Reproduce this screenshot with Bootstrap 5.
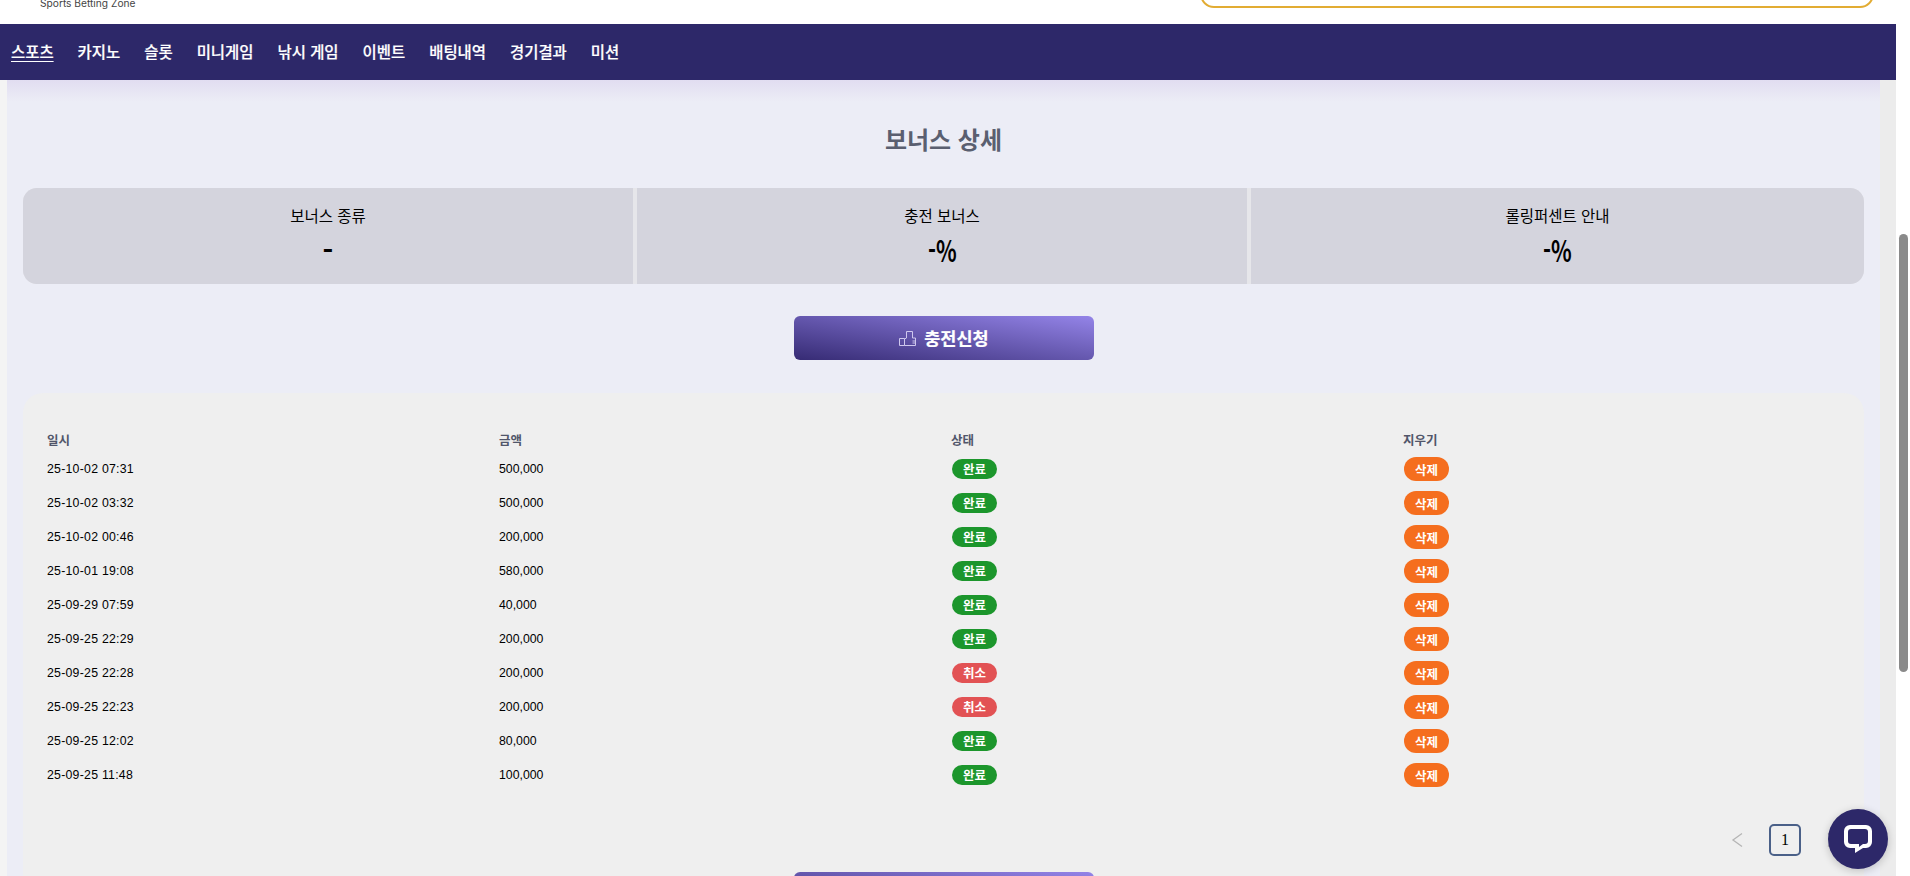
<!DOCTYPE html>
<html lang="ko">
<head>
  <meta charset="UTF-8">
  <title>보너스 상세</title>
  <link href="https://cdn.jsdelivr.net/npm/bootstrap@5.3.0/dist/css/bootstrap.min.css" rel="stylesheet">
  <style>
    html, body { height: 100%; }
    body {
      font-family: "Noto Sans CJK KR", "Liberation Sans", sans-serif;
      background: #fff;
      color: #000;
      overflow: hidden;
    }
    .page-wrap { height: 876px; overflow: hidden; min-width: 0; }
    .top-head { height: 24px; overflow: hidden; background: #fff; flex: none; }
    .brand-sub { font-family: Inter, sans-serif; font-size: 10.2px; line-height: 14px; color: #444; margin-left: 40px; margin-bottom: 14px; }
    .search-box {
      width: 674px; height: 44px; margin-right: 22px; margin-bottom: 16px;
      border: 2px solid #e2ac33; border-radius: 14px; background: #fff;
      padding: 0 0 5px 15px; color: #777; font-size: 13px; line-height: 16px;
      display: flex; align-items: flex-end;
    }
    .main-nav { height: 56px; background: #2d2869; flex: none; }
    .main-nav .nav-link { color: #fff; font-size: 15.45px; font-weight: 500; padding: 0 12px 2px; line-height: 54px; -webkit-text-stroke: .2px #fff; }
    .main-nav .nav-link:first-child { padding-left: 11px; }
    .main-nav .nav-link.on { text-decoration: underline; text-underline-offset: 3px; }
    .side-l { width: 7px; background: #f4f4f4; flex: none; }
    .side-r { width: 16px; background: #ececec; flex: none; }
    .bonus-area {
      flex: 1 1 auto; min-width: 0;
      background: linear-gradient(#e1ddf1, #ecedf6 22px);
      background-color: #ecedf6;
      padding: 0 16px;
    }
    .bonus-title { height: 108px; margin: 0; font-size: 24px; font-weight: 700; color: #5a5f70; line-height: 118px; text-align: center; }
    .info-bar { height: 96px; border-radius: 14px; overflow: hidden; gap: 4px; background: #e6e6ea; }
    .info-cell { flex: 0 0 610px; background: #d4d4dd; text-align: center; }
    .info-cell:last-child { flex: 1 1 0; }
    .info-label { font-size: 15.5px; line-height: 24px; margin-top: 15px; }
    .info-val { font-size: 29px; font-weight: 700; line-height: 36px; margin-top: 4px; }
    .info-val span { display: inline-block; transform: scaleX(.74); }
    .info-val .dash-only { transform: none; }
    .btn-row { padding-left: 1px; }
    .apply-btn {
      width: 300px; height: 44px; border: 0; border-radius: 6px; color: #fff;
      background: linear-gradient(to top right, #362b74, #9484e8);
      font-size: 17.5px; font-weight: 700; padding: 0; -webkit-text-stroke: .2px #fff;
    }
    .apply-btn:hover { color: #fff; background: linear-gradient(to top right, #362b74, #9484e8); }
    .history-card { background: #efefef; border: 0; border-radius: 20px 20px 0 0; margin-top: 33px; padding: 35px 9px 0 24px; }
    .history-tbl { table-layout: fixed; margin: 0; --bs-table-bg: transparent; }
    .history-tbl th, .history-tbl td { border: 0; padding: 0; vertical-align: middle; background: transparent; }
    .history-tbl th { font-size: 12.5px; font-weight: 700; color: #51566a; height: 24px; padding-top: 1px; }
    .history-tbl td { font-family: "Liberation Sans", sans-serif; font-size: 12.3px; height: 34px; color: #000; }
    .history-tbl td.date-cell, .history-tbl td.amt-cell { padding-top: 1px; }
    .history-tbl td.date-cell { letter-spacing: .25px; }
    .st-pill { display: inline-block; width: 45px; height: 20px; line-height: 19px; margin-left: 1px; border-radius: 10px; color: #fff; font-family: "Noto Sans CJK KR", sans-serif; font-size: 12.5px; font-weight: 700; text-align: center; }
    .st-ok { background: #1c962c; }
    .st-no { background: #e25254; }
    .del-pill { display: block; width: 45px; height: 24px; line-height: 23px; padding: 0; border: 0; border-radius: 12px; background: #f56e1e; color: #fff; font-family: "Noto Sans CJK KR", sans-serif; font-size: 12.5px; font-weight: 700; margin-left: 1px; }
    .pager { gap: 16px; margin: 32px 7px 16px 0; }
    .pager .page-link { width: 32px; height: 32px; padding: 0; background: transparent; border: 0; display: flex; align-items: center; justify-content: center; color: #000; font-family: "Liberation Serif", serif; font-size: 16px; border-radius: 5px; }
    .pager .active .page-link { border: 2px solid #4a6088; background: transparent; color: #000; }
    .btn-row-last { padding-right: 14px; }
    .scroll-rail { width: 14px; background: #fff; flex: none; padding: 234px 2px 0 3px; }
    .scroll-thumb { height: 438px; background: #8a8a8a; border-radius: 5px; }
    .chat-fab { position: absolute; left: 1828px; top: 809px; width: 60px; height: 60px; border-radius: 50%; background: #2d2869; box-shadow: 0 2px 8px rgba(0,0,0,.2); }
  </style>
</head>
<body>
  <div class="d-flex">
    <div class="page-wrap flex-grow-1 d-flex flex-column">
      <header class="top-head d-flex justify-content-between align-items-end">
        <div class="brand-sub">Sports Betting Zone</div>
        <div class="search-box">검색어 입력</div>
      </header>
      <nav class="main-nav nav align-items-center">
        <a class="nav-link on" href="#">스포츠</a>
        <a class="nav-link" href="#">카지노</a>
        <a class="nav-link" href="#">슬롯</a>
        <a class="nav-link" href="#">미니게임</a>
        <a class="nav-link" href="#">낚시 게임</a>
        <a class="nav-link" href="#">이벤트</a>
        <a class="nav-link" href="#">배팅내역</a>
        <a class="nav-link" href="#">경기결과</a>
        <a class="nav-link" href="#">미션</a>
      </nav>
      <div class="d-flex flex-grow-1">
        <div class="side-l"></div>
        <main class="bonus-area">
          <h2 class="bonus-title">보너스 상세</h2>
          <div class="info-bar d-flex">
            <div class="info-cell"><div class="info-label">보너스 종류</div><div class="info-val"><span class="dash-only">-</span></div></div>
            <div class="info-cell"><div class="info-label">충전 보너스</div><div class="info-val"><span>-%</span></div></div>
            <div class="info-cell"><div class="info-label">롤링퍼센트 안내</div><div class="info-val"><span>-%</span></div></div>
          </div>
          <div class="text-center mt-4 pt-2 btn-row">
            <button class="btn apply-btn d-inline-flex align-items-center justify-content-center gap-2">
              <svg width="17" height="17" viewBox="0 0 17 17" fill="none" stroke="#cfc8ee" stroke-width="1"><path d="M.5 8.500h5v7h-5zM5.500 9l2-1V1.500h6V8h3v3h-3m3 0v2h-3m3 0v2.500h-11"/></svg>
              <span>충전신청</span>
            </button>
          </div>
          <section class="card history-card">
            <table class="table history-tbl">
              <thead>
                <tr><th>일시</th><th>금액</th><th>상태</th><th>지우기</th></tr>
              </thead>
              <tbody id="rows"></tbody>
            </table>
            <ul class="pagination pager justify-content-end">
              <li class="page-item"><a class="page-link" href="#"><svg width="14" height="16" viewBox="0 0 14 16" fill="none" stroke="#b5b5b5" stroke-width="1.300"><path d="M11 1.500 2 8l9 6.500"/></svg></a></li>
              <li class="page-item active"><a class="page-link" href="#">1</a></li>
              <li class="page-item"><a class="page-link" href="#"><svg width="14" height="16" viewBox="0 0 14 16" fill="none" stroke="#b5b5b5" stroke-width="1.300"><path d="m3 1.500 9 6.500-9 6.500"/></svg></a></li>
            </ul>
            <div class="text-center btn-row-last"><button class="btn apply-btn">충전신청</button></div>
          </section>
        </main>
        <div class="side-r"></div>
      </div>
    </div>
    <div class="scroll-rail"><div class="scroll-thumb"></div></div>
  </div>
  <a class="chat-fab d-flex align-items-center justify-content-center" href="#" aria-label="chat">
    <svg width="30" height="30" viewBox="0 0 30 30"><path fill="#fff" fill-rule="evenodd" d="M7 1h16a6 6 0 0 1 6 6v11a6 6 0 0 1-6 6h-3l-8 5v-5H7a6 6 0 0 1-6-6V7a6 6 0 0 1 6-6Zm1 4a3 3 0 0 0-3 3v9a3 3 0 0 0 3 3h8v3l4-3h2a3 3 0 0 0 3-3V8a3 3 0 0 0-3-3Z"/></svg>
  </a>
  <script src="https://cdn.jsdelivr.net/npm/bootstrap@5.3.0/dist/js/bootstrap.bundle.min.js"></script>
  <script>
    const history = [
      ["25-10-02 07:31", "500,000", "완료"],
      ["25-10-02 03:32", "500,000", "완료"],
      ["25-10-02 00:46", "200,000", "완료"],
      ["25-10-01 19:08", "580,000", "완료"],
      ["25-09-29 07:59", "40,000", "완료"],
      ["25-09-25 22:29", "200,000", "완료"],
      ["25-09-25 22:28", "200,000", "취소"],
      ["25-09-25 22:23", "200,000", "취소"],
      ["25-09-25 12:02", "80,000", "완료"],
      ["25-09-25 11:48", "100,000", "완료"]
    ];
    document.getElementById("rows").innerHTML = history.map(r =>
      `<tr><td class="date-cell">${r[0]}</td><td class="amt-cell">${r[1]}</td><td><span class="st-pill ${r[2] === "완료" ? "st-ok" : "st-no"}">${r[2]}</span></td><td><button class="del-pill">삭제</button></td></tr>`
    ).join("");
  </script>
</body>
</html>
